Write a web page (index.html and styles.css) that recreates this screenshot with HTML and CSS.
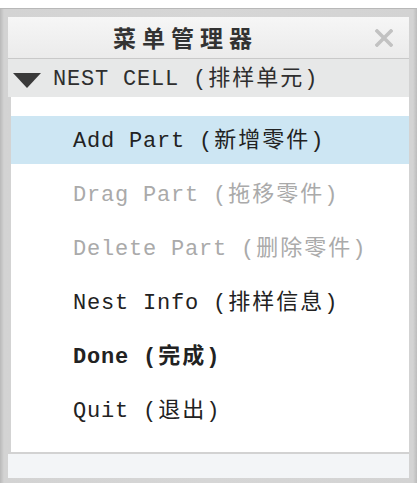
FILE: index.html
```html
<!DOCTYPE html>
<html>
<head>
<meta charset="utf-8">
<link rel="stylesheet" href="styles.css">
</head>
<body>
<div class="frame">
  <div class="titlebar">
    <span class="title">菜单管理器</span>
    <svg class="close" width="18" height="18" viewBox="0 0 18 18"><path d="M2 2 L16 16 M16 2 L2 16" stroke="#c2c2c2" stroke-width="3.6" stroke-linecap="square"/></svg>
  </div>
  <div class="header">
    <span class="tri"></span>
    <span class="label">NEST CELL <span class="cjk">(排样单元)</span></span>
  </div>
  <div class="list">
    <div class="row active"><span>Add Part <span class="cjk">(新增零件)</span></span></div>
    <div class="row disabled"><span>Drag Part <span class="cjk">(拖移零件)</span></span></div>
    <div class="row disabled"><span>Delete Part <span class="cjk">(删除零件)</span></span></div>
    <div class="row"><span>Nest Info <span class="cjk">(排样信息)</span></span></div>
    <div class="row bold"><span>Done <span class="cjk">(完成)</span></span></div>
    <div class="row"><span>Quit <span class="cjk">(退出)</span></span></div>
  </div>
  <div class="footer"></div>
</div>
</body>
</html>
```
FILE: styles.css
```css
html, body {
  margin: 0;
  padding: 0;
  background: #ffffff;
}
.frame {
  margin-top: 8px;
  height: 475px;
  box-sizing: border-box;
  padding: 8px 8px 5px 8px;
  background: linear-gradient(to right, #b9b9b9 0px, #d3d3d3 4px, #d6d6d6 50%, #d3d3d3 calc(100% - 4px), #bcbcbc 100%);
  border-top: 1px solid #b8b8b8;
  display: flex;
  flex-direction: column;
  font-family: "Liberation Mono", "Noto Sans CJK SC", monospace;
}
.titlebar {
  height: 41px;
  border-bottom: 1px solid #c9c9c9;
  background: linear-gradient(to bottom, #f6f6f6, #ebebeb);
  display: flex;
  align-items: center;
  flex-shrink: 0;
}
.title {
  margin-left: 105px;
  font-family: "Noto Sans CJK SC", sans-serif;
  font-weight: bold;
  font-size: 23px;
  letter-spacing: 6px;
  color: #333333;
  line-height: 1;
}
.close {
  margin-left: auto;
  margin-right: 16px;
}
.header {
  height: 38px;
  box-sizing: border-box;
  padding-top: 4px;
  background: #e7e8e8;
  display: flex;
  align-items: center;
  flex-shrink: 0;
}
.tri {
  width: 0;
  height: 0;
  margin-left: 5px;
  margin-right: 12px;
  border-left: 14px solid transparent;
  border-right: 14px solid transparent;
  border-top: 15px solid #3a3a3a;
}
.label {
  font-size: 22px;
  letter-spacing: 0.8px;
  color: #2e2e2e;
  white-space: pre;
  line-height: 34px;
}
.cjk {
  font-size: 22px;
  letter-spacing: 2px;
}
.list {
  flex: 1;
  margin-left: 3px;
  background: #ffffff;
  padding: 19px 0 18px 0;
  display: flex;
  flex-direction: column;
  gap: 6px;
}
.row {
  height: 48px;
  box-sizing: border-box;
  padding-top: 4px;
  line-height: 44px;
  padding-left: 62px;
  font-size: 22px;
  letter-spacing: 0.8px;
  color: #222222;
  white-space: pre;
}
.row.active {
  background: #cde6f3;
}
.row.disabled {
  color: #aaaaaa;
}
.row.bold {
  font-weight: bold;
}
.footer {
  height: 24px;
  border-top: 2px solid #d2d2d2;
  background: #f3f5f7;
  flex-shrink: 0;
}
```
